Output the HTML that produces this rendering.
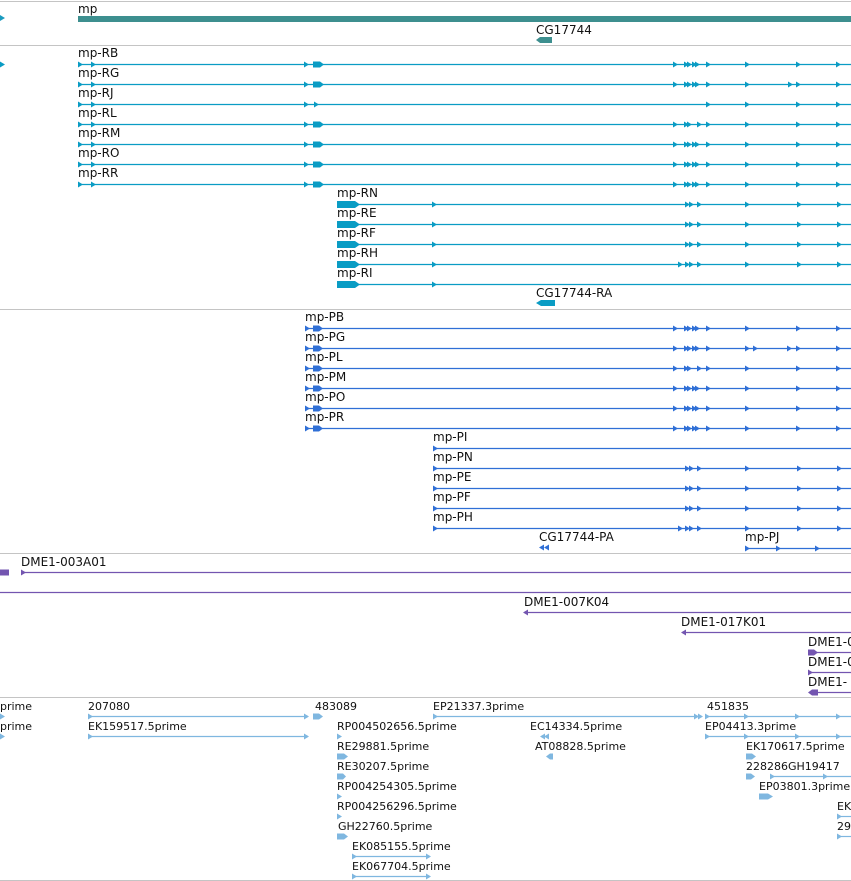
<!DOCTYPE html>
<html><head><meta charset="utf-8"><style>
html,body{margin:0;padding:0;background:#fff;}
svg{display:block;}
text{font-family:"DejaVu Sans","Liberation Sans",sans-serif;font-size:12px;fill:#111;}
.s text{font-size:11px;}
</style></head><body>
<svg width="851" height="881" viewBox="0 0 851 881" xmlns="http://www.w3.org/2000/svg">
<defs>
<path id="r" d="M0,-3L5,0L0,3Z"/>
<path id="l" d="M5,-3L0,0L5,3Z"/>
</defs>
<g stroke="#c4c4c4" stroke-width="1">
<line x1="0" y1="1.5" x2="851" y2="1.5"/>
<line x1="0" y1="45.5" x2="851" y2="45.5"/>
<line x1="0" y1="309.5" x2="851" y2="309.5"/>
<line x1="0" y1="553.5" x2="851" y2="553.5"/>
<line x1="0" y1="697.5" x2="851" y2="697.5"/>
<line x1="0" y1="880.5" x2="851" y2="880.5"/>
</g>

<text x="78" y="13">mp</text>
<rect x="78" y="16" width="773" height="6" fill="#3d8f8f"/>
<text x="536" y="34">CG17744</text>
<path d="M536,40L540,37H552V43H540Z" fill="#3d8f8f"/>
<use href="#r" x="0" y="18" fill="#1a9bbf"/>

<g fill="#0a9cc4" stroke="#0a9cc4">
<g stroke-width="1.2">
<line x1="78" y1="64.5" x2="851" y2="64.5"/><line x1="78" y1="84.5" x2="851" y2="84.5"/>
<line x1="78" y1="104.5" x2="851" y2="104.5"/><line x1="78" y1="124.5" x2="851" y2="124.5"/>
<line x1="78" y1="144.5" x2="851" y2="144.5"/><line x1="78" y1="164.5" x2="851" y2="164.5"/>
<line x1="78" y1="184.5" x2="851" y2="184.5"/>
<line x1="337" y1="204.5" x2="851" y2="204.5"/><line x1="337" y1="224.5" x2="851" y2="224.5"/>
<line x1="337" y1="244.5" x2="851" y2="244.5"/><line x1="337" y1="264.5" x2="851" y2="264.5"/>
<line x1="337" y1="284.5" x2="851" y2="284.5"/>
</g>
<g stroke="none">
<use href="#r" x="0" y="64.5"/>
<g id="ra"><use href="#r" x="78" y="64.5"/><use href="#r" x="91" y="64.5"/><use href="#r" x="304" y="64.5"/><path d="M313,61.5H320L324,64.5L320,67.5H313Z"/></g>
<use href="#ra" y="20"/><use href="#ra" y="60"/><use href="#ra" y="80"/><use href="#ra" y="100"/><use href="#ra" y="120"/>
<g><use href="#r" x="78" y="104.5"/><use href="#r" x="91" y="104.5"/><use href="#r" x="304" y="104.5"/><use href="#r" x="314" y="104.5"/></g>
<g id="rb"><use href="#r" x="673" y="64.5"/><use href="#r" x="684" y="64.5"/><use href="#r" x="687" y="64.5"/><use href="#r" x="692" y="64.5"/><use href="#r" x="695" y="64.5"/><use href="#r" x="706" y="64.5"/><use href="#r" x="745" y="64.5"/><use href="#r" x="796" y="64.5"/><use href="#r" x="836" y="64.5"/></g>
<use href="#rb" y="20"/><use href="#rb" y="80"/><use href="#rb" y="100"/><use href="#rb" y="120"/>
<use href="#r" x="788" y="84.5"/>
<g><use href="#r" x="706" y="104.5"/><use href="#r" x="745" y="104.5"/><use href="#r" x="796" y="104.5"/><use href="#r" x="836" y="104.5"/></g>
<g><use href="#r" x="673" y="124.5"/><use href="#r" x="684" y="124.5"/><use href="#r" x="687" y="124.5"/><use href="#r" x="697" y="124.5"/><use href="#r" x="706" y="124.5"/><use href="#r" x="745" y="124.5"/><use href="#r" x="796" y="124.5"/><use href="#r" x="836" y="124.5"/></g>
<g id="rc"><path d="M337,201H355L360,204.5L355,208H337Z"/><use href="#r" x="432" y="204.5"/></g>
<use href="#rc" y="20"/><use href="#rc" y="40"/><use href="#rc" y="60"/><use href="#rc" y="80"/>
<g id="rd"><use href="#r" x="685" y="204.5"/><use href="#r" x="689" y="204.5"/><use href="#r" x="697" y="204.5"/><use href="#r" x="745" y="204.5"/><use href="#r" x="797" y="204.5"/><use href="#r" x="837" y="204.5"/></g>
<use href="#rd" y="20"/><use href="#rd" y="40"/><use href="#rd" y="60"/>
<use href="#r" x="678" y="264.5"/>
<path d="M536,303L541,300H555V306H541Z"/>
</g>
</g>
<text x="78" y="57">mp-RB</text><text x="78" y="77">mp-RG</text><text x="78" y="97">mp-RJ</text>
<text x="78" y="117">mp-RL</text><text x="78" y="137">mp-RM</text><text x="78" y="157">mp-RO</text>
<text x="78" y="177">mp-RR</text>
<text x="337" y="197">mp-RN</text><text x="337" y="217">mp-RE</text><text x="337" y="237">mp-RF</text>
<text x="337" y="257">mp-RH</text><text x="337" y="277">mp-RI</text>
<text x="536" y="297">CG17744-RA</text>

<g fill="#2f6fd6" stroke="#2f6fd6">
<g stroke-width="1.2">
<line x1="305" y1="328.5" x2="851" y2="328.5"/><line x1="305" y1="348.5" x2="851" y2="348.5"/>
<line x1="305" y1="368.5" x2="851" y2="368.5"/><line x1="305" y1="388.5" x2="851" y2="388.5"/>
<line x1="305" y1="408.5" x2="851" y2="408.5"/><line x1="305" y1="428.5" x2="851" y2="428.5"/>
<line x1="433" y1="448.5" x2="851" y2="448.5"/><line x1="433" y1="468.5" x2="851" y2="468.5"/>
<line x1="433" y1="488.5" x2="851" y2="488.5"/><line x1="433" y1="508.5" x2="851" y2="508.5"/>
<line x1="433" y1="528.5" x2="851" y2="528.5"/>
<line x1="745" y1="548.5" x2="851" y2="548.5"/>
</g>
<g stroke="none">
<g id="pa"><use href="#r" x="305" y="328.5"/><path d="M313,325.5H319L323,328.5L319,331.5H313Z"/></g>
<use href="#pa" y="20"/><use href="#pa" y="40"/><use href="#pa" y="60"/><use href="#pa" y="80"/><use href="#pa" y="100"/>
<g id="pb"><use href="#r" x="673" y="328.5"/><use href="#r" x="684" y="328.5"/><use href="#r" x="687" y="328.5"/><use href="#r" x="692" y="328.5"/><use href="#r" x="695" y="328.5"/><use href="#r" x="706" y="328.5"/><use href="#r" x="745" y="328.5"/><use href="#r" x="796" y="328.5"/><use href="#r" x="836" y="328.5"/></g>
<use href="#pb" y="20"/><use href="#pb" y="60"/><use href="#pb" y="80"/><use href="#pb" y="100"/>
<use href="#r" x="753" y="348.5"/><use href="#r" x="787" y="348.5"/>
<g><use href="#r" x="673" y="368.5"/><use href="#r" x="684" y="368.5"/><use href="#r" x="687" y="368.5"/><use href="#r" x="697" y="368.5"/><use href="#r" x="706" y="368.5"/><use href="#r" x="745" y="368.5"/><use href="#r" x="796" y="368.5"/><use href="#r" x="836" y="368.5"/></g>
<use href="#r" x="433" y="448.5"/>
<g id="pc"><use href="#r" x="433" y="468.5"/><use href="#r" x="685" y="468.5"/><use href="#r" x="689" y="468.5"/><use href="#r" x="697" y="468.5"/><use href="#r" x="745" y="468.5"/><use href="#r" x="797" y="468.5"/><use href="#r" x="837" y="468.5"/></g>
<use href="#pc" y="20"/><use href="#pc" y="40"/><use href="#pc" y="60"/>
<use href="#r" x="678" y="528.5"/>
<use href="#l" x="539" y="547.5"/><use href="#l" x="544" y="547.5"/>
<use href="#r" x="745" y="548.5"/>
<use href="#r" x="776" y="548.5"/><use href="#r" x="815" y="548.5"/>
</g>
</g>
<text x="305" y="321">mp-PB</text><text x="305" y="341">mp-PG</text><text x="305" y="361">mp-PL</text>
<text x="305" y="381">mp-PM</text><text x="305" y="401">mp-PO</text><text x="305" y="421">mp-PR</text>
<text x="433" y="441">mp-PI</text><text x="433" y="461">mp-PN</text><text x="433" y="481">mp-PE</text>
<text x="433" y="501">mp-PF</text><text x="433" y="521">mp-PH</text>
<text x="539" y="541">CG17744-PA</text><text x="745" y="541">mp-PJ</text>

<g fill="#7355b0" stroke="#7355b0">
<g stroke-width="1.3">
<line x1="21" y1="572.5" x2="851" y2="572.5"/>
<line x1="0" y1="592.5" x2="851" y2="592.5"/>
<line x1="525" y1="612.5" x2="851" y2="612.5"/>
<line x1="683" y1="632.5" x2="851" y2="632.5"/>
<line x1="808" y1="652.5" x2="851" y2="652.5"/>
<line x1="808" y1="672.5" x2="851" y2="672.5"/>
<line x1="810" y1="692.5" x2="851" y2="692.5"/>
</g>
<g stroke="none">
<path d="M0,569.5H9V575.5H0Z"/>
<use href="#r" x="21" y="572.5"/>
<use href="#l" x="523" y="612.5"/>
<use href="#l" x="681" y="632.5"/>
<path d="M808,649.5H814L818,652.5L814,655.5H808Z"/>
<use href="#r" x="808" y="672.5"/>
<path d="M808,692.5L812,689.5H818V695.5H812Z"/>
</g>
</g>
<text x="21" y="566">DME1-003A01</text>
<text x="524" y="606">DME1-007K04</text>
<text x="681" y="626">DME1-017K01</text>
<text x="808" y="646">DME1-0</text>
<text x="808" y="666">DME1-0</text>
<text x="808" y="686">DME1-</text>

<g class="s">
<g fill="#7fb7e0" stroke="#7fb7e0">
<g stroke-width="1.2">
<line x1="88" y1="716.5" x2="308" y2="716.5"/>
<line x1="433" y1="716.5" x2="700" y2="716.5"/>
<line x1="705" y1="716.5" x2="851" y2="716.5"/>
<line x1="88" y1="736.5" x2="308" y2="736.5"/>
<line x1="705" y1="736.5" x2="851" y2="736.5"/>
<line x1="770" y1="776.5" x2="851" y2="776.5"/>
<line x1="837" y1="816.5" x2="851" y2="816.5"/>
<line x1="837" y1="836.5" x2="851" y2="836.5"/>
<line x1="352" y1="856.5" x2="428" y2="856.5"/>
<line x1="352" y1="876.5" x2="428" y2="876.5"/>
</g>
<g stroke="none">
<use href="#r" x="0" y="716.5"/><use href="#r" x="0" y="736.5"/>
<use href="#r" x="88" y="716.5"/><use href="#r" x="304" y="716.5"/>
<path d="M313,713.5H319L323,716.5L319,719.5H313Z"/>
<use href="#r" x="433" y="716.5"/><use href="#r" x="694" y="716.5"/><use href="#r" x="698" y="716.5"/>
<use href="#r" x="705" y="716.5"/><use href="#r" x="744" y="716.5"/><use href="#r" x="795" y="716.5"/><use href="#r" x="836" y="716.5"/>
<use href="#r" x="88" y="736.5"/><use href="#r" x="304" y="736.5"/>
<use href="#r" x="337" y="736.5"/>
<use href="#l" x="540" y="736.5"/><use href="#l" x="544" y="736.5"/>
<use href="#r" x="705" y="736.5"/><use href="#r" x="744" y="736.5"/><use href="#r" x="795" y="736.5"/><use href="#r" x="836" y="736.5"/>
<path d="M337,753.5H344L348,756.5L344,759.5H337Z"/>
<path d="M546,756.5L550,753.5H553V759.5H550Z"/>
<path d="M746,753.5H752L756,756.5L752,759.5H746Z"/>
<path d="M337,773.5H343L346,776.5L343,779.5H337Z"/>
<path d="M746,773.5H751L755,776.5L751,779.5H746Z"/>
<use href="#r" x="770" y="776.5"/><use href="#r" x="823" y="776.5"/>
<use href="#r" x="337" y="796.5"/>
<path d="M759,793.5H768L773,796.5L768,799.5H759Z"/>
<use href="#r" x="337" y="816.5"/><use href="#r" x="837" y="816.5"/>
<path d="M337,833.5H344L348,836.5L344,839.5H337Z"/><use href="#r" x="837" y="836.5"/>
<use href="#r" x="352" y="856.5"/><use href="#r" x="426" y="856.5"/>
<use href="#r" x="352" y="876.5"/><use href="#r" x="426" y="876.5"/>
</g>
</g>
<text x="0" y="710">prime</text><text x="88" y="710">207080</text><text x="315" y="710">483089</text>
<text x="433" y="710">EP21337.3prime</text><text x="707" y="710">451835</text>
<text x="0" y="730">prime</text><text x="88" y="730">EK159517.5prime</text>
<text x="337" y="730">RP004502656.5prime</text><text x="530" y="730">EC14334.5prime</text>
<text x="705" y="730">EP04413.3prime</text>
<text x="337" y="750">RE29881.5prime</text><text x="535" y="750">AT08828.5prime</text>
<text x="746" y="750">EK170617.5prime</text>
<text x="337" y="770">RE30207.5prime</text><text x="746" y="770">228286GH19417</text>
<text x="337" y="790">RP004254305.5prime</text><text x="759" y="790">EP03801.3prime</text>
<text x="337" y="810">RP004256296.5prime</text><text x="837" y="810">EK</text>
<text x="338" y="830">GH22760.5prime</text><text x="837" y="830">29</text>
<text x="352" y="850">EK085155.5prime</text>
<text x="352" y="870">EK067704.5prime</text>
</g>
</svg>
</body></html>
